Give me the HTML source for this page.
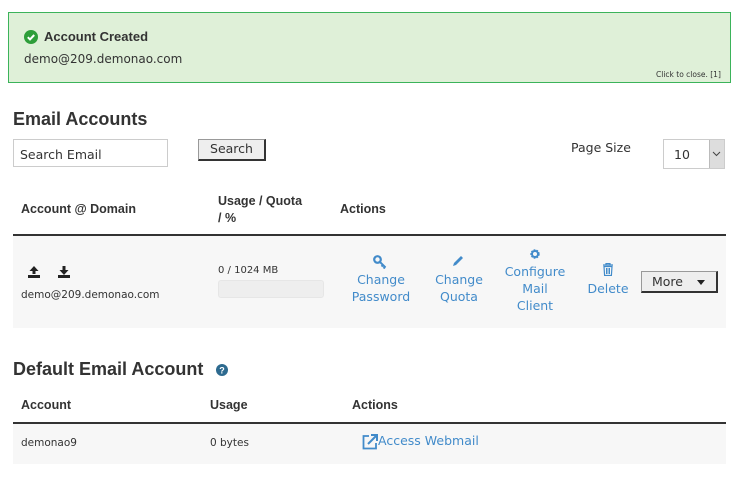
<!DOCTYPE html>
<html><head><meta charset="utf-8"><style>
*{margin:0;padding:0;box-sizing:border-box}
body{width:735px;height:487px;background:#fff;position:relative;font-family:"DejaVu Sans",Verdana,sans-serif;color:#333;overflow:hidden}
.a{position:absolute;white-space:nowrap}
.b{font-family:"Liberation Sans",Arial,sans-serif;font-weight:bold;color:#333}
.l{color:#428bca;font-size:12.5px;text-align:center;line-height:17px}
</style></head><body>
<div class="a" style="left:8px;top:12px;width:723px;height:71px;background:#dff0d8;border:1px solid #3bb35a"></div>
<svg class="a" style="left:24px;top:30px" width="14" height="14" viewBox="0 0 14 14"><circle cx="7" cy="7" r="7" fill="#2e9e3a"/><path d="M3.8 7.2l2.2 2.2 4.2-4.4" stroke="#fff" stroke-width="2" fill="none"/></svg>
<div class="a b" style="left:44px;top:29px;font-size:13px">Account Created</div>
<div class="a" style="left:24px;top:52px;font-size:12px">demo@209.demonao.com</div>
<div class="a" style="left:656px;top:70px;font-size:7.5px">Click to close. [1]</div>

<div class="a b" style="left:13px;top:109px;font-size:18px">Email Accounts</div>
<div class="a" style="left:13px;top:139px;width:155px;height:28px;border:1px solid #ccc;font-size:12.5px;padding:7px 0 0 6px">Search Email</div>
<div class="a" style="left:198px;top:139px;width:68px;height:22px;background:#eee;border:1px solid #999;border-right:2px solid #333;border-bottom:2px solid #333;font-size:12.5px;text-align:center;line-height:18px">Search</div>
<div class="a" style="left:571px;top:140px;font-size:12.5px">Page Size</div>
<div class="a" style="left:663px;top:139px;width:62px;height:30px;border:1px solid #ccc;font-size:12.5px;padding:7px 0 0 10px">10</div>
<div class="a" style="left:709px;top:140px;width:15px;height:28px;background:#ddd;border-left:1px solid #bbb"></div>
<svg class="a" style="left:712px;top:151px" width="9" height="6"><path d="M1 1l3.5 3.5L8 1" stroke="#444" fill="none"/></svg>

<div class="a b" style="left:21px;top:202px;font-size:12.5px">Account @ Domain</div>
<div class="a b" style="left:218px;top:193px;font-size:12.5px;line-height:17px">Usage / Quota<br>/ %</div>
<div class="a b" style="left:340px;top:202px;font-size:12.5px">Actions</div>
<div class="a" style="left:13px;top:234px;width:713px;height:2px;background:#333"></div>
<div class="a" style="left:13px;top:236px;width:713px;height:92px;background:#f7f7f7"></div>
<svg class="a" style="left:28px;top:266px" width="12" height="12" viewBox="0 0 12 12"><path d="M6 0L1.5 5h3v3h3V5h3z M0 9h12v3H0z" fill="#222"/></svg>
<svg class="a" style="left:58px;top:266px" width="12" height="12" viewBox="0 0 12 12"><path d="M4.5 0h3v4h3L6 9 1.5 4h3z M0 9h12v3H0z" fill="#222"/></svg>
<div class="a" style="left:21px;top:289px;font-size:10.5px">demo@209.demonao.com</div>
<div class="a" style="left:218px;top:265px;font-size:10px">0 / 1024 MB</div>
<div class="a" style="left:218px;top:280px;width:106px;height:18px;background:#eee;border:1px solid #e6e6e6;border-radius:3px"></div>

<svg class="a" style="left:373px;top:255px" width="14" height="14" viewBox="0 0 14 14"><circle cx="4.5" cy="4.5" r="3.3" stroke="#428bca" stroke-width="2.2" fill="none"/><path d="M6.5 6.5l6 6M10 10l-1.5 1.5M12 12l-1.5 1.5" stroke="#428bca" stroke-width="2"/></svg>
<div class="a l" style="left:344px;top:271px;width:74px">Change<br>Password</div>
<svg class="a" style="left:451px;top:254px" width="14" height="14" viewBox="0 0 14 14"><path d="M2 12l1-3 7-7 2 2-7 7z" fill="#428bca"/></svg>
<div class="a l" style="left:424px;top:271px;width:70px">Change<br>Quota</div>
<svg class="a" style="left:529px;top:248px" width="12" height="12" viewBox="0 0 12 12"><circle cx="6" cy="6" r="3.6" stroke="#428bca" stroke-width="2.2" fill="none" stroke-dasharray="1.6 1"/><circle cx="6" cy="6" r="3" stroke="#428bca" stroke-width="2" fill="none"/></svg>
<div class="a l" style="left:495px;top:263px;width:80px">Configure<br>Mail<br>Client</div>
<svg class="a" style="left:602px;top:263px" width="12" height="13" viewBox="0 0 12 13"><path d="M1 2h10M4 2V0.5h4V2M2 3.5h8l-0.6 9H2.6z" stroke="#428bca" stroke-width="1.2" fill="none"/><path d="M4.5 5v6M6 5v6M7.5 5v6" stroke="#428bca"/></svg>
<div class="a l" style="left:582px;top:280px;width:52px">Delete</div>
<div class="a" style="left:641px;top:271px;width:77px;height:22px;background:#eee;border:1px solid #999;border-right:2px solid #333;border-bottom:2px solid #333;font-size:12.5px;padding:2px 0 0 10px">More</div>
<svg class="a" style="left:697px;top:280px" width="8" height="5"><path d="M0 0h8L4 5z" fill="#222"/></svg>

<div class="a b" style="left:13px;top:359px;font-size:18px">Default Email Account</div>
<svg class="a" style="left:216px;top:364px" width="12" height="12" viewBox="0 0 12 12"><circle cx="6" cy="6" r="6" fill="#2d6a8f"/><text x="6" y="9.5" font-size="9" font-weight="bold" fill="#fff" text-anchor="middle" font-family="Liberation Sans">?</text></svg>
<div class="a b" style="left:21px;top:398px;font-size:12.5px">Account</div>
<div class="a b" style="left:210px;top:398px;font-size:12.5px">Usage</div>
<div class="a b" style="left:352px;top:398px;font-size:12.5px">Actions</div>
<div class="a" style="left:13px;top:422px;width:713px;height:2px;background:#333"></div>
<div class="a" style="left:13px;top:424px;width:713px;height:40px;background:#f7f7f7"></div>
<div class="a" style="left:21px;top:437px;font-size:10.5px">demonao9</div>
<div class="a" style="left:210px;top:437px;font-size:10.5px">0 bytes</div>
<svg class="a" style="left:362px;top:434px" width="16" height="16" viewBox="0 0 16 16"><path d="M7 2H1.5v12.5H14V9" stroke="#428bca" stroke-width="1.8" fill="none"/><path d="M6 10l8-8M9 1h6v6" stroke="#428bca" stroke-width="2" fill="none"/></svg>
<div class="a" style="left:378px;top:433px;font-size:12.5px;color:#428bca">Access Webmail</div>
</body></html>
